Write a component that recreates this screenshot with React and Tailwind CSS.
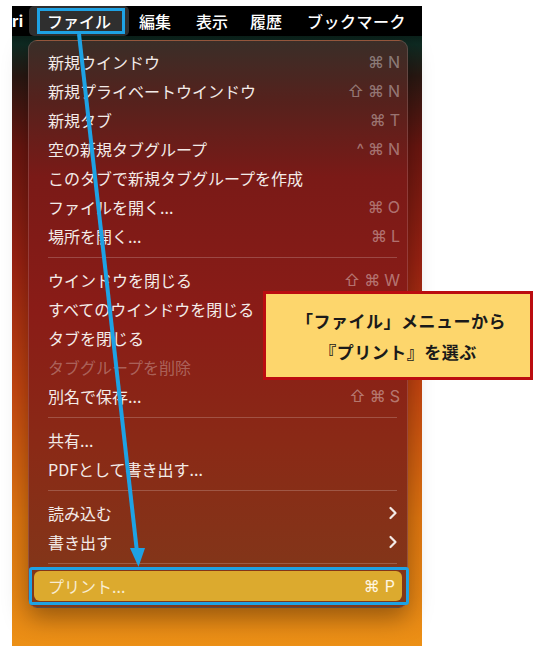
import React from 'react';

const jp = { fontFamily: '"Noto Sans CJK JP", "Noto Sans", sans-serif' };
const keyFont = { fontFamily: 'Inter, "DejaVu Sans", "Noto Sans CJK JP", sans-serif' };

function Shortcut({ keys }) {
    return (
        <span className="flex items-center gap-[4px] text-[16px] text-white/40" style={keyFont}>
            {keys.map((k, i) => (
                <span key={i}>{k}</span>
            ))}
        </span>
    );
}

function Item({ label, keys, dim, sub }) {
    return (
        <div className="h-[29px] flex items-center justify-between pl-[19px] pr-[7px]">
            <span className={dim ? 'text-white/30' : 'text-[#f3ebe8]'}>{label}</span>
            {keys && <Shortcut keys={keys} />}
            {sub && (
                <svg width="10" height="14" viewBox="0 0 10 14" className="mr-[2px]">
                    <path d="M2.5 2 L7.5 7 L2.5 12" fill="none" stroke="#f3ebe8" strokeWidth="2.2" strokeLinecap="round" strokeLinejoin="round" />
                </svg>
            )}
        </div>
    );
}

function Separator() {
    return (
        <div className="h-[15px] flex items-center pl-[19px] pr-[10px]">
            <div className="h-px w-full bg-white/20"></div>
        </div>
    );
}

export default function App() {
    return (
        <div className="relative w-[540px] h-[652px] bg-white overflow-hidden" style={jp}>
            {/* screenshot */}
            <div className="pt-[6px] pl-[12px]">
                <div className="w-[410px] h-[640px] bg-[linear-gradient(180deg,#000_0%,#0e2a22_6%,#2a1812_11%,#6a1610_22%,#9a2212_40%,#c44610_60%,#e07610_80%,#ec9016_100%)]">
                    {/* menubar */}
                    <div className="h-[30px] bg-black flex items-center text-white text-[16px] font-medium">
                        <span className="w-[15px] font-bold overflow-hidden" style={keyFont}>ri</span>
                        <div className="ml-[2px] h-[30px] w-[100px] rounded-[5px] bg-[#2f2f2f] flex items-center pl-[18px]">ファイル</div>
                        <span className="ml-[10px]">編集</span>
                        <span className="ml-[25px]">表示</span>
                        <span className="ml-[22px]">履歴</span>
                        <span className="ml-[25px] tracking-[0.5px]">ブックマーク</span>
                    </div>

                    {/* menu */}
                    <div className="ml-[16px] mt-[4px] w-[380px] rounded-[9px] border border-white/15 py-[6px] text-[16px] shadow-[0_10px_24px_rgba(0,0,0,0.35)] bg-[linear-gradient(180deg,#3a2e28_0%,#54221d_10%,#7a1a17_24%,#8a1c17_48%,#8a2a16_72%,#80391a_100%)]">
                        <Item label="新規ウインドウ" keys={['⌘', 'N']} />
                        <Item label="新規プライベートウインドウ" keys={['⇧', '⌘', 'N']} />
                        <Item label="新規タブ" keys={['⌘', 'T']} />
                        <Item label="空の新規タブグループ" keys={['^', '⌘', 'N']} />
                        <Item label="このタブで新規タブグループを作成" />
                        <Item label="ファイルを開く..." keys={['⌘', 'O']} />
                        <Item label="場所を開く..." keys={['⌘', 'L']} />
                        <Separator />
                        <Item label="ウインドウを閉じる" keys={['⇧', '⌘', 'W']} />
                        <Item label="すべてのウインドウを閉じる" />
                        <Item label="タブを閉じる" />
                        <Item label="タブグループを削除" dim />
                        <Item label="別名で保存..." keys={['⇧', '⌘', 'S']} />
                        <Separator />
                        <Item label="共有..." />
                        <Item label="PDFとして書き出す..." />
                        <Separator />
                        <Item label="読み込む" sub />
                        <Item label="書き出す" sub />
                        <Separator />
                        <div className="mx-[5px] h-[30px] rounded-[6px] bg-[#dcaa2e] flex items-center justify-between pl-[14px] pr-[7px]">
                            <span className="text-[#f8edd2]">プリント...</span>
                            <span className="flex items-center gap-[5px] text-[16px] text-[#fff6e0]" style={keyFont}>
                                <span>⌘</span>
                                <span>P</span>
                            </span>
                        </div>
                    </div>
                </div>
            </div>

            {/* annotation boxes */}
            <div className="absolute left-[37px] top-[8px] w-[88px] h-[26px] border-[3px] border-[#1ea2e4]"></div>
            <div className="absolute left-[29px] top-[567px] w-[380px] h-[38px] border-[3px] border-[#1ea2e4] rounded-[3px]"></div>

            {/* arrow */}
            <svg className="absolute left-0 top-0" width="540" height="652" viewBox="0 0 540 652">
                <line x1="79" y1="34" x2="137" y2="552" stroke="#1ea2e4" strokeWidth="4" />
                <polygon points="130,548 145,548 138.5,567" fill="#1ea2e4" />
            </svg>

            {/* callout */}
            <div className="absolute left-[263px] top-[291px] w-[270px] h-[89px] border-[3px] border-[#bb0c10] bg-[#fdd66c] flex flex-col items-center justify-center gap-[6px] text-[17px] font-bold text-[#1a1a1a] leading-[25px] tracking-[0.5px]">
                <span className="pl-[6px]">「ファイル」メニューから</span>
                <span>『プリント』を選ぶ</span>
            </div>
        </div>
    );
}
